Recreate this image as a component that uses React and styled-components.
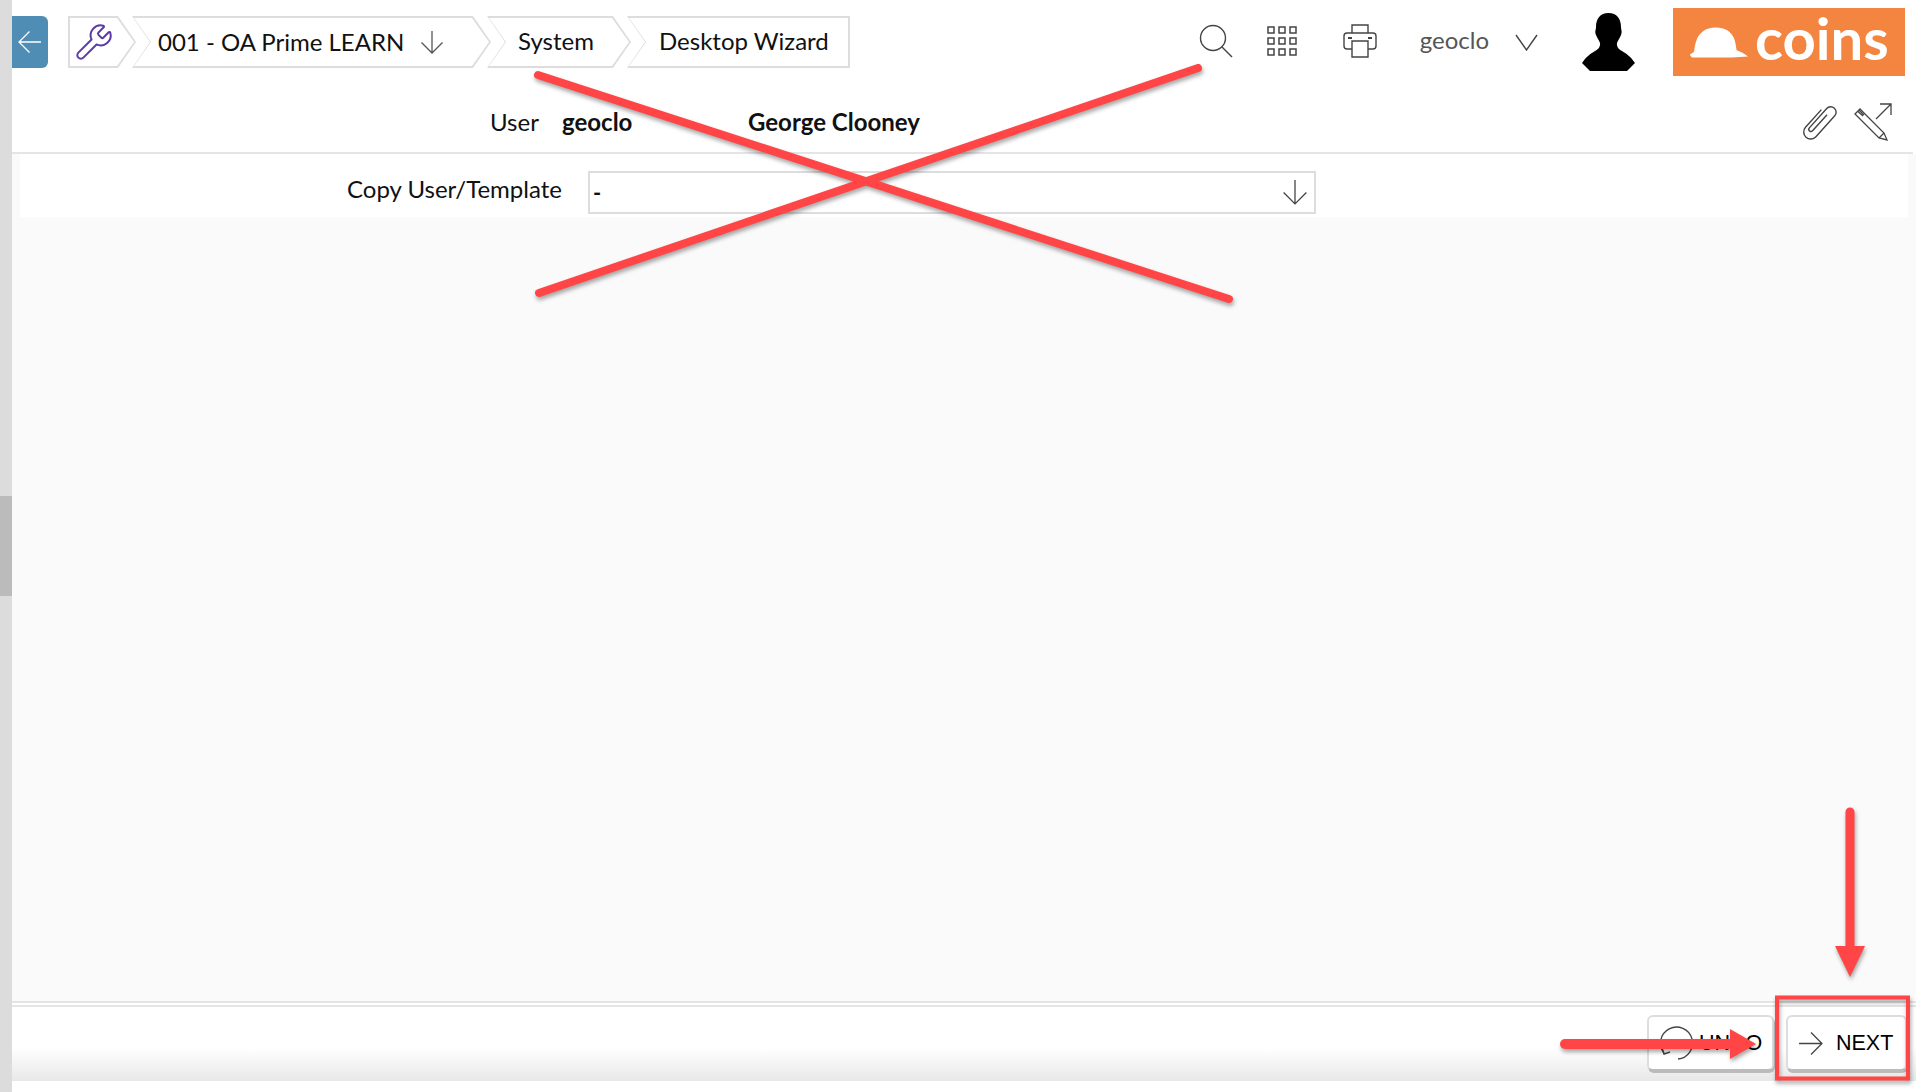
import React from 'react';
import styled, { createGlobalStyle } from 'styled-components';
import { Wrench } from 'lucide-react';

const GlobalStyle = createGlobalStyle`
  html, body {
    margin: 0;
    padding: 0;
    background: #fff;
    overflow: hidden;
  }
  * {
    box-sizing: border-box;
  }
`;

const Arrow = ({ dir = 0, size = 24, color = '#444', className }) => (
  <ArrowSvg className={className} $dir={dir} width={size} height={size} viewBox="0 0 24 24" fill="none" stroke={color} strokeWidth={24 / size * 1.3}>
    <path d="M1 12H23M11.5 1.5 1 12l10.5 10.5" />
  </ArrowSvg>
);

function App() {
  return (
    <Page>
      <GlobalStyle />
      <ScrollTrack>
        <ScrollThumb />
      </ScrollTrack>
      <Main>
        <TopBar>
          <BackButton>
            <Arrow size={24} color="#fff" />
          </BackButton>
          <Breadcrumbs>
            <Crumb $first $width={68}>
              <Wrench size={40} strokeWidth={1.2} color="#5a3ba8" />
            </Crumb>
            <Crumb $width={359} $pad={26} $lift={1}>
              001 - OA Prime LEARN
              <CrumbArrow dir={-90} size={24} color="#555" />
            </Crumb>
            <Crumb $width={144} $pad={31} $lift={3}>System</Crumb>
            <Crumb $last $width={223} $pad={32} $lift={3}>Desktop Wizard</Crumb>
          </Breadcrumbs>
          <Tools>
            <ToolSlot $left={0} $lift>
              <svg width="34" height="34" viewBox="0 0 34 34" fill="none" stroke="#444" strokeWidth="1.4">
                <circle cx="14" cy="14" r="12.5" />
                <path d="M23 23 33 33" />
              </svg>
            </ToolSlot>
            <ToolSlot $left={34} $lift>
              <svg width="30" height="30" viewBox="0 0 30 30" fill="none" stroke="#444" strokeWidth="1.5">
                {[1, 12, 23].map(y => [1, 12, 23].map(x => (
                  <rect key={`${x}-${y}`} x={x} y={y} width="6" height="6" />
                )))}
              </svg>
            </ToolSlot>
            <ToolSlot $left={46} $lift>
              <svg width="34" height="34" viewBox="0 0 34 34" fill="none" stroke="#444" strokeWidth="1.4">
                <path d="M9 9V1h16v8" />
                <path d="M9 25H4a3 3 0 0 1-3-3V12a3 3 0 0 1 3-3h26a3 3 0 0 1 3 3v10a3 3 0 0 1-3 3h-5" />
                <path d="M9 17h16v16H9z" />
                <path d="M5 14h4M25 14h4" strokeWidth="2" />
              </svg>
            </ToolSlot>
            <UserName>geoclo</UserName>
            <ToolSlot $left={26}>
              <svg width="23" height="17" viewBox="0 0 23 17" fill="none" stroke="#444" strokeWidth="1.4">
                <path d="M1 1l10.500 15L22 1" />
              </svg>
            </ToolSlot>
            <ToolSlot $left={44}>
              <svg width="53" height="58" viewBox="0 0 53 58">
                <path d="M26.500 0C18 0 14 6 14 14c0 3-1.500 4 0 8 1 3 3 5 4 8 .5 3-1 6-5 8-5 3-9 6-13 12l8 8h37l8-8c-4-6-8-9-13-12-4-2-5.500-5-5-8 1-3 3-5 4-8 1.500-4 0-5 0-8C39 6 35 0 26.500 0z" fill="#000" />
              </svg>
            </ToolSlot>
            <Logo>
              <svg width="58" height="32" viewBox="0 0 56 30">
                <path d="M0 27c1-1 3-1 4-3 1-9 3-15 8-19 5-4 13-5 20-3 7 2 11 8 12 15l1 6c3 1 7 3 11 6-10 1-22 1-32 1-8 0-16 0-22 0-1-1-2-2-2-3z" fill="#fff" />
              </svg>
              <LogoText>coins</LogoText>
            </Logo>
          </Tools>
        </TopBar>
        <InfoRow>
          <InfoLabel>User</InfoLabel>
          <InfoCode>geoclo</InfoCode>
          <InfoName>George Clooney</InfoName>
          <InfoActions>
            <svg width="40" height="38" viewBox="0 0 37 34" fill="none" stroke="#444" strokeWidth="1.3">
              <g transform="rotate(42 18.500 17) translate(3.500 -3)">
                <path d="M9 10v22a6.500 6.500 0 0 0 13 0V6a5 5 0 0 0-10 0v24a2 2 0 0 0 4 0V10" />
              </g>
            </svg>
            <svg width="38" height="38" viewBox="0 0 38 38" fill="none" stroke="#444" strokeWidth="1.3">
              <path d="M1 11 6 6l24 24 3 7-8-2z" />
              <path d="M4 8.500 9 13M5 7l5 5M25 35l5-5" />
              <path d="M22 16 37 1M26 1h11v11" />
            </svg>
          </InfoActions>
        </InfoRow>
        <Content>
          <FormRow>
            <FormLabel>Copy User/Template</FormLabel>
            <Select>
              -
              <Arrow dir={-90} size={26} color="#444" />
            </Select>
          </FormRow>
        </Content>
        <Footer>
          <FooterButton $width={127}>
            <svg width="34" height="34" viewBox="0 0 34 34" fill="none" stroke="#444" strokeWidth="1.4">
              <path d="M5 27A16 16 0 1 1 19 33" />
              <path d="M3 22l2 6 6-2" />
            </svg>
            <ButtonText>UNDO</ButtonText>
          </FooterButton>
          <FooterButton $width={121}>
            <NextArrow dir={180} size={25} color="#444" />
            <ButtonText>NEXT</ButtonText>
          </FooterButton>
        </Footer>
      </Main>
      <Annotations viewBox="0 0 1916 1092">
        <g stroke="#ff4545" strokeWidth="8" strokeLinecap="round" fill="none">
          <path d="M538 75 1229 299" />
          <path d="M539 293 1198 68" />
          <path d="M1850 812V950" strokeWidth="9" />
          <path d="M1565 1044H1735" strokeWidth="10" />
          <rect x="1777" y="997.500" width="131" height="81" strokeLinecap="butt" strokeWidth="4" />
        </g>
        <path d="M1835 946h30l-15 31z" fill="#ff4545" />
        <path d="M1730 1029l26 15-26 15z" fill="#ff4545" />
      </Annotations>
    </Page>
  );
}

const Page = styled.div`
  position: relative;
  display: flex;
  width: 1916px;
  height: 1092px;
  font-family: Lato, "Liberation Sans", sans-serif;
  color: #111;
  background: #fff;
`;

const ScrollTrack = styled.div`
  display: flex;
  flex-direction: column;
  width: 12px;
  padding-top: 496px;
  background: #dcdcdc;
`;

const ScrollThumb = styled.div`
  height: 100px;
  background: #bbbbbb;
`;

const Main = styled.div`
  flex: 1;
  display: flex;
  flex-direction: column;
  min-width: 0;
  padding-bottom: 11px;
`;

const TopBar = styled.div`
  display: flex;
  align-items: flex-start;
  height: 84px;
  padding-top: 16px;
`;

const BackButton = styled.div`
  display: flex;
  align-items: center;
  justify-content: center;
  width: 36px;
  height: 52px;
  background: #4f8db5;
  border-radius: 0 6px 6px 0;
`;

const ArrowSvg = styled.svg`
  display: block;
  flex: none;
  transform: rotate(${p => p.$dir}deg);
`;

const Breadcrumbs = styled.div`
  display: flex;
  margin-left: 20px;
`;

const Crumb = styled.div`
  position: relative;
  isolation: isolate;
  display: flex;
  align-items: center;
  justify-content: ${p => (p.$first ? 'center' : 'flex-start')};
  width: ${p => p.$width}px;
  height: 52px;
  margin-left: ${p => (p.$first ? 0 : -4)}px;
  padding-left: ${p => p.$pad || 0}px;
  padding-right: ${p => (p.$first ? 17 : 0)}px;
  padding-bottom: ${p => p.$lift || 0}px;
  font-size: 24px;
  color: #111;

  &::before {
    content: '';
    position: absolute;
    inset: 0;
    z-index: -2;
    background: #dddddd;
    clip-path: ${p =>
      p.$first
        ? 'polygon(0 0, calc(100% - 18px) 0, 100% 50%, calc(100% - 18px) 100%, 0 100%)'
        : p.$last
          ? 'polygon(0 0, 100% 0, 100% 100%, 0 100%, 18px 50%)'
          : 'polygon(0 0, calc(100% - 18px) 0, 100% 50%, calc(100% - 18px) 100%, 0 100%, 18px 50%)'};
  }

  &::after {
    content: '';
    position: absolute;
    inset: 2px;
    z-index: -1;
    background: #fff;
    clip-path: ${p =>
      p.$first
        ? 'polygon(0 0, calc(100% - 17px) 0, 100% 50%, calc(100% - 17px) 100%, 0 100%)'
        : p.$last
          ? 'polygon(0 0, 100% 0, 100% 100%, 0 100%, 17px 50%)'
          : 'polygon(0 0, calc(100% - 17px) 0, 100% 50%, calc(100% - 17px) 100%, 0 100%, 17px 50%)'};
  }
`;

const CrumbArrow = styled(Arrow)`
  margin-left: 16px;
`;

const Tools = styled.div`
  display: flex;
  align-items: center;
  margin-left: auto;
  height: 68px;
  margin-top: -8px;
  padding-right: 11px;
`;

const ToolSlot = styled.div`
  display: flex;
  flex: none;
  margin-left: ${p => p.$left}px;
  margin-bottom: ${p => (p.$lift ? 2 : 0)}px;
`;

const UserName = styled.span`
  margin-left: 43px;
  margin-bottom: 6px;
  font-size: 24px;
  color: #555;
`;

const Logo = styled.div`
  display: flex;
  align-items: center;
  flex: none;
  gap: 7px;
  width: 232px;
  height: 68px;
  margin-left: 38px;
  padding-left: 17px;
  background: #f48540;
`;

const LogoText = styled.span`
  font-size: 58px;
  font-weight: 700;
  line-height: 1;
  color: #fff;
  margin-top: -8px;
`;

const InfoRow = styled.div`
  display: flex;
  align-items: center;
  height: 70px;
  padding: 7px 21px 0 478px;
  margin-right: 3px;
  border-bottom: 2px solid #e5e5e5;
  font-size: 24px;
`;

const InfoLabel = styled.span`
  width: 72px;
`;

const InfoCode = styled.b`
  width: 186px;
`;

const InfoName = styled.b``;

const InfoActions = styled.div`
  display: flex;
  align-items: center;
  gap: 15px;
  margin-left: auto;
`;

const Content = styled.div`
  flex: 1;
  background: #fafafa;
`;

const FormRow = styled.div`
  display: flex;
  align-items: center;
  height: 63px;
  margin: 0 8px 0 8px;
  padding: 8px 0 0 327px;
  background: #fff;
`;

const FormLabel = styled.label`
  font-size: 24px;
  margin-bottom: 2px;
`;

const Select = styled.div`
  display: flex;
  align-items: center;
  justify-content: space-between;
  width: 728px;
  height: 43px;
  margin: 5px 0 0 26px;
  padding: 0 6px 0 3px;
  border: 2px solid #dddddd;
  background: #fff;
  font-size: 22px;
  font-weight: 700;
`;

const Footer = styled.div`
  display: flex;
  justify-content: flex-end;
  gap: 12px;
  height: 80px;
  padding: 8px 9px 0 0;
  border-top: 6px double #e5e5e5;
  background: linear-gradient(#fff 55%, #e8e8e8 100%) padding-box;
`;

const FooterButton = styled.div`
  display: flex;
  align-items: center;
  gap: 6px;
  width: ${p => p.$width}px;
  height: 56px;
  padding-left: 10px;
  background: #fff;
  border: 2px solid #dddddd;
  border-bottom-color: #bbbbbb;
  border-radius: 6px;
  box-shadow: 1px 2px 0 #bbbbbb;
`;

const ButtonText = styled.span`
  font-family: "Liberation Sans", Arial, sans-serif;
  font-size: 21.5px;
  color: #000;
`;

const NextArrow = styled(Arrow)`
  margin-right: 7px;
`;

const Annotations = styled.svg`
  position: absolute;
  inset: 0;
  width: 1916px;
  height: 1092px;
  pointer-events: none;
  filter: drop-shadow(1px 3px 2px rgba(0, 0, 0, 0.35));
`;

export default App;
